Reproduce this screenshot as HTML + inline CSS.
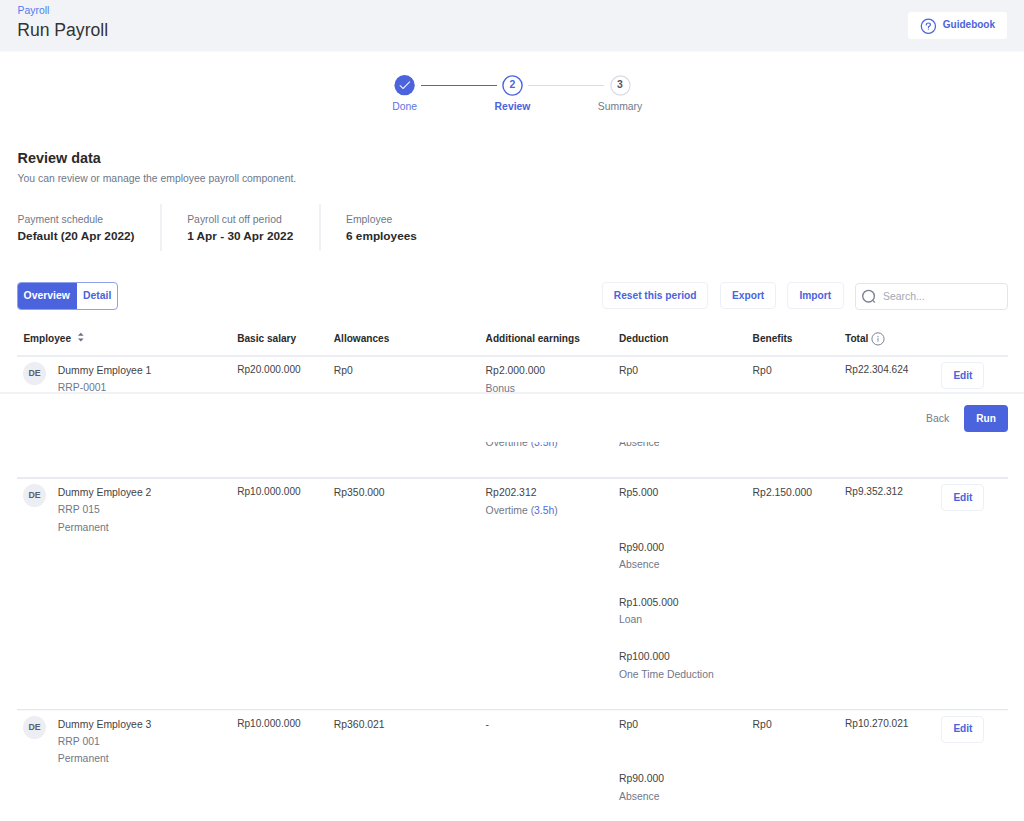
<!DOCTYPE html>
<html><head><meta charset="utf-8"><style>
html,body{margin:0;padding:0;background:#fff;width:1024px;height:821px;overflow:hidden;position:relative;font-family:"Liberation Sans",sans-serif;}
.t{position:absolute;white-space:nowrap;}
.r{position:absolute;}
</style></head><body>
<div class="r" style="left:0.00px;top:0.00px;width:1024.00px;height:51.00px;background:#f2f3f7;"></div>
<div class="r" style="left:0.00px;top:51.00px;width:1024.00px;height:1.00px;background:#f8f9fb;"></div>
<div class="t" style="left:17.60px;top:3.00px;font-size:10.4px;line-height:16.64px;color:#4f7cf0;">Payroll</div>
<div class="t" style="left:17.20px;top:16.00px;font-size:17.6px;line-height:28.16px;color:#333333;">Run Payroll</div>
<div class="r" style="left:908.10px;top:12.00px;width:98.90px;height:27.20px;background:#fff;border-radius:3px;"></div>
<svg class="r" style="left:920px;top:17.6px" width="17" height="17" viewBox="0 0 17 17"><circle cx="8.4" cy="8.25" r="7.1" fill="none" stroke="#4B63DD" stroke-width="1.25"/><path d="M6.3 7.0 C6.3 5.8 7.2 5.0 8.35 5.0 C9.5 5.0 10.4 5.8 10.4 6.8 C10.4 7.8 9.6 8.1 8.9 8.6 C8.5 8.9 8.4 9.1 8.4 9.4" fill="none" stroke="#4B63DD" stroke-width="1.2" stroke-linecap="round"/><circle cx="8.4" cy="11.1" r="0.7" fill="#4B63DD"/></svg>
<div class="t" style="left:942.80px;top:17.00px;font-size:10.0px;line-height:16.0px;color:#4B63DD;font-weight:700;">Guidebook</div>
<div class="r" style="left:420.60px;top:84.80px;width:76.00px;height:1.20px;background:#4B63DD;"></div>
<div class="r" style="left:528.40px;top:84.80px;width:76.00px;height:1.20px;background:#d9dce3;"></div>
<svg class="r" style="left:394px;top:74.6px" width="21" height="21" viewBox="0 0 21 21"><circle cx="10.6" cy="10.2" r="10.15" fill="#4B63DD"/><path d="M6.1 10.7 L9.1 13.5 L15.6 6.8" fill="none" stroke="#e6e9fb" stroke-width="1.15" stroke-linecap="round" stroke-linejoin="round"/></svg>
<svg class="r" style="left:502px;top:74.8px" width="21" height="21" viewBox="0 0 21 21"><circle cx="10.5" cy="10.5" r="9.6" fill="#fff" stroke="#4B63DD" stroke-width="1.4"/></svg>
<svg class="r" style="left:609.5px;top:74.8px" width="21" height="21" viewBox="0 0 21 21"><circle cx="10.5" cy="10.5" r="9.6" fill="#fff" stroke="#d9dce3" stroke-width="1.2"/></svg>
<div class="t" style="left:512.50px;top:77.00px;font-size:10.4px;line-height:16.64px;color:#4B63DD;font-weight:700;transform:translateX(-50%);">2</div>
<div class="t" style="left:620.00px;top:77.00px;font-size:10.4px;line-height:16.64px;color:#4f5566;font-weight:700;transform:translateX(-50%);">3</div>
<div class="t" style="left:404.70px;top:99.00px;font-size:10.4px;line-height:16.64px;color:#5b73e3;transform:translateX(-50%);">Done</div>
<div class="t" style="left:512.50px;top:99.00px;font-size:10.4px;line-height:16.64px;color:#4B63DD;font-weight:700;transform:translateX(-50%);">Review</div>
<div class="t" style="left:620.00px;top:99.00px;font-size:10.4px;line-height:16.64px;color:#737a8a;transform:translateX(-50%);">Summary</div>
<div class="t" style="left:17.60px;top:147.00px;font-size:14.4px;line-height:23.04px;color:#2a2a2a;font-weight:700;">Review data</div>
<div class="t" style="left:17.60px;top:171.00px;font-size:10.4px;line-height:16.64px;color:#6f7789;">You can review or manage the employee payroll component.</div>
<div class="t" style="left:17.60px;top:212.00px;font-size:10.4px;line-height:16.64px;color:#6f7789;">Payment schedule</div>
<div class="t" style="left:17.60px;top:227.00px;font-size:11.8px;line-height:18.88px;color:#2a2a2a;font-weight:700;">Default (20 Apr 2022)</div>
<div class="r" style="left:160.00px;top:204.00px;width:2.00px;height:47.00px;background:#f0f1f5;"></div>
<div class="t" style="left:187.20px;top:212.00px;font-size:10.4px;line-height:16.64px;color:#6f7789;">Payroll cut off period</div>
<div class="t" style="left:187.20px;top:227.00px;font-size:11.8px;line-height:18.88px;color:#2a2a2a;font-weight:700;">1 Apr - 30 Apr 2022</div>
<div class="r" style="left:319.00px;top:204.00px;width:2.00px;height:47.00px;background:#f0f1f5;"></div>
<div class="t" style="left:346.00px;top:212.00px;font-size:10.4px;line-height:16.64px;color:#6f7789;">Employee</div>
<div class="t" style="left:346.00px;top:227.00px;font-size:11.8px;line-height:18.88px;color:#2a2a2a;font-weight:700;">6 employees</div>
<div class="r" style="left:17px;top:282px;width:99px;height:26px;border:1px solid #8fa0ec;border-radius:4px;overflow:hidden;background:#fff"><div style="position:absolute;left:0;top:0;width:59px;height:26px;background:#4B63DD"></div></div>
<div class="t" style="left:23.60px;top:288.00px;font-size:10.4px;line-height:16.64px;color:#fff;font-weight:700;">Overview</div>
<div class="t" style="left:83.00px;top:288.00px;font-size:10.4px;line-height:16.64px;color:#4B63DD;font-weight:700;">Detail</div>
<div class="r" style="left:601.60px;top:282.40px;width:106.40px;height:27.00px;border:1px solid #eef0f8;border-radius:4px;box-sizing:border-box;background:#fff;"></div>
<div class="t" style="left:613.80px;top:288.00px;font-size:10.2px;line-height:16.32px;color:#4B63DD;font-weight:700;">Reset this period</div>
<div class="r" style="left:720.00px;top:282.40px;width:56.00px;height:27.00px;border:1px solid #eef0f8;border-radius:4px;box-sizing:border-box;background:#fff;"></div>
<div class="t" style="left:732.00px;top:288.00px;font-size:10.2px;line-height:16.32px;color:#4B63DD;font-weight:700;">Export</div>
<div class="r" style="left:787.20px;top:282.40px;width:56.80px;height:27.00px;border:1px solid #eef0f8;border-radius:4px;box-sizing:border-box;background:#fff;"></div>
<div class="t" style="left:799.40px;top:288.00px;font-size:10.2px;line-height:16.32px;color:#4B63DD;font-weight:700;">Import</div>
<div class="r" style="left:855.00px;top:282.50px;width:153.00px;height:27.50px;border:1px solid #e2e5eb;border-radius:4px;box-sizing:border-box;background:#fff;"></div>
<svg class="r" style="left:861px;top:288.5px" width="16" height="16" viewBox="0 0 16 16"><circle cx="7.55" cy="7.15" r="5.8" fill="none" stroke="#778093" stroke-width="1.35"/><path d="M12.3 11.9 L13.5 13.1" stroke="#778093" stroke-width="1.3" stroke-linecap="round"/></svg>
<div class="t" style="left:883.00px;top:289.00px;font-size:10.4px;line-height:16.64px;color:#a3a8b4;">Search...</div>
<div class="t" style="left:23.40px;top:331.00px;font-size:10.1px;line-height:16.16px;color:#2a2a2a;font-weight:700;">Employee</div>
<svg class="r" style="left:77px;top:331.5px" width="8" height="11" viewBox="0 0 8 11"><path d="M0.9 3.7 L3.8 0.7 L6.7 3.7 Z M0.9 6.6 L3.8 9.6 L6.7 6.6 Z" fill="#6a7284"/></svg>
<div class="t" style="left:237.20px;top:331.00px;font-size:10.1px;line-height:16.16px;color:#2a2a2a;font-weight:700;">Basic salary</div>
<div class="t" style="left:333.80px;top:331.00px;font-size:10.1px;line-height:16.16px;color:#2a2a2a;font-weight:700;">Allowances</div>
<div class="t" style="left:485.60px;top:331.00px;font-size:10.1px;line-height:16.16px;color:#2a2a2a;font-weight:700;">Additional earnings</div>
<div class="t" style="left:619.00px;top:331.00px;font-size:10.1px;line-height:16.16px;color:#2a2a2a;font-weight:700;">Deduction</div>
<div class="t" style="left:752.60px;top:331.00px;font-size:10.1px;line-height:16.16px;color:#2a2a2a;font-weight:700;">Benefits</div>
<div class="t" style="left:845.00px;top:331.00px;font-size:10.1px;line-height:16.16px;color:#2a2a2a;font-weight:700;">Total</div>
<svg class="r" style="left:870.5px;top:332px" width="14" height="14" viewBox="0 0 14 14"><circle cx="7" cy="6.9" r="6.1" fill="none" stroke="#7a8294" stroke-width="1.0"/><circle cx="7" cy="4.3" r="0.65" fill="#7a8294"/><rect x="6.55" y="5.7" width="0.9" height="4.0" fill="#7a8294"/></svg>
<div class="r" style="left:17.00px;top:355.40px;width:991.00px;height:1.30px;background:#eceef3;"></div>
<div class="r" style="left:23.00px;top:362.20px;width:23.00px;height:23.00px;background:#eceef3;border-radius:50%;"></div>
<div class="t" style="left:34.60px;top:366.00px;font-size:8.8px;line-height:14.08px;color:#596072;font-weight:700;transform:translateX(-50%);">DE</div>
<div class="t" style="left:57.80px;top:363.00px;font-size:10.4px;line-height:16.64px;color:#434343;">Dummy Employee 1</div>
<div class="t" style="left:57.80px;top:380.00px;font-size:10.4px;line-height:16.64px;color:#6f7789;">RRP-0001</div>
<div class="t" style="left:237.20px;top:362.00px;font-size:10.1px;line-height:16.16px;color:#434343;">Rp20.000.000</div>
<div class="t" style="left:333.80px;top:363.00px;font-size:10.4px;line-height:16.64px;color:#434343;">Rp0</div>
<div class="t" style="left:485.60px;top:363.00px;font-size:10.4px;line-height:16.64px;color:#434343;">Rp2.000.000</div>
<div class="t" style="left:485.60px;top:381.00px;font-size:10.4px;line-height:16.64px;color:#6f7789;">Bonus</div>
<div class="t" style="left:485.60px;top:418.00px;font-size:10.4px;line-height:16.64px;color:#434343;">Rp202.312</div>
<div class="t" style="left:485.60px;top:435.00px;font-size:10.4px;line-height:16.64px;color:#6f7789;">Overtime (<span style="color:#4f6be6">3.5h</span>)</div>
<div class="t" style="left:619.00px;top:363.00px;font-size:10.4px;line-height:16.64px;color:#434343;">Rp0</div>
<div class="t" style="left:619.00px;top:418.00px;font-size:10.4px;line-height:16.64px;color:#434343;">Rp90.000</div>
<div class="t" style="left:619.00px;top:435.00px;font-size:10.4px;line-height:16.64px;color:#6f7789;">Absence</div>
<div class="t" style="left:752.60px;top:363.00px;font-size:10.4px;line-height:16.64px;color:#434343;">Rp0</div>
<div class="t" style="left:845.00px;top:362.00px;font-size:10.1px;line-height:16.16px;color:#434343;">Rp22.304.624</div>
<div class="r" style="left:940.90px;top:362.30px;width:43.50px;height:27.20px;border:1px solid #eef0f8;border-radius:4px;box-sizing:border-box;background:#fff;"></div>
<div class="t" style="left:953.40px;top:368.00px;font-size:10.1px;line-height:16.16px;color:#4B63DD;font-weight:700;">Edit</div>
<div class="r" style="left:17.00px;top:477.00px;width:991.00px;height:2.00px;background:#e9ebf0;"></div>
<div class="r" style="left:23.00px;top:484.20px;width:23.00px;height:23.00px;background:#eceef3;border-radius:50%;"></div>
<div class="t" style="left:34.60px;top:488.00px;font-size:8.8px;line-height:14.08px;color:#596072;font-weight:700;transform:translateX(-50%);">DE</div>
<div class="t" style="left:57.80px;top:485.00px;font-size:10.4px;line-height:16.64px;color:#434343;">Dummy Employee 2</div>
<div class="t" style="left:57.80px;top:502.00px;font-size:10.4px;line-height:16.64px;color:#6f7789;">RRP 015</div>
<div class="t" style="left:57.80px;top:520.00px;font-size:10.4px;line-height:16.64px;color:#6f7789;">Permanent</div>
<div class="t" style="left:237.20px;top:484.00px;font-size:10.1px;line-height:16.16px;color:#434343;">Rp10.000.000</div>
<div class="t" style="left:333.80px;top:485.00px;font-size:10.4px;line-height:16.64px;color:#434343;">Rp350.000</div>
<div class="t" style="left:485.60px;top:485.00px;font-size:10.4px;line-height:16.64px;color:#434343;">Rp202.312</div>
<div class="t" style="left:485.60px;top:503.00px;font-size:10.4px;line-height:16.64px;color:#6f7789;">Overtime (<span style="color:#4f6be6">3.5h</span>)</div>
<div class="t" style="left:619.00px;top:485.00px;font-size:10.4px;line-height:16.64px;color:#434343;">Rp5.000</div>
<div class="t" style="left:619.00px;top:540.00px;font-size:10.4px;line-height:16.64px;color:#434343;">Rp90.000</div>
<div class="t" style="left:619.00px;top:557.00px;font-size:10.4px;line-height:16.64px;color:#6f7789;">Absence</div>
<div class="t" style="left:619.00px;top:595.00px;font-size:10.4px;line-height:16.64px;color:#434343;">Rp1.005.000</div>
<div class="t" style="left:619.00px;top:612.00px;font-size:10.4px;line-height:16.64px;color:#6f7789;">Loan</div>
<div class="t" style="left:619.00px;top:649.00px;font-size:10.4px;line-height:16.64px;color:#434343;">Rp100.000</div>
<div class="t" style="left:619.00px;top:667.00px;font-size:10.4px;line-height:16.64px;color:#6f7789;">One Time Deduction</div>
<div class="t" style="left:752.60px;top:485.00px;font-size:10.4px;line-height:16.64px;color:#434343;">Rp2.150.000</div>
<div class="t" style="left:845.00px;top:484.00px;font-size:10.1px;line-height:16.16px;color:#434343;">Rp9.352.312</div>
<div class="r" style="left:940.90px;top:484.30px;width:43.50px;height:27.20px;border:1px solid #eef0f8;border-radius:4px;box-sizing:border-box;background:#fff;"></div>
<div class="t" style="left:953.40px;top:490.00px;font-size:10.1px;line-height:16.16px;color:#4B63DD;font-weight:700;">Edit</div>
<div class="r" style="left:17.00px;top:709.00px;width:991.00px;height:1.00px;background:#e3e6eb;"></div>
<div class="r" style="left:17.00px;top:710.00px;width:991.00px;height:1.00px;background:#f7f8fa;"></div>
<div class="r" style="left:23.00px;top:715.80px;width:23.00px;height:23.00px;background:#eceef3;border-radius:50%;"></div>
<div class="t" style="left:34.60px;top:720.00px;font-size:8.8px;line-height:14.08px;color:#596072;font-weight:700;transform:translateX(-50%);">DE</div>
<div class="t" style="left:57.80px;top:717.00px;font-size:10.4px;line-height:16.64px;color:#434343;">Dummy Employee 3</div>
<div class="t" style="left:57.80px;top:734.00px;font-size:10.4px;line-height:16.64px;color:#6f7789;">RRP 001</div>
<div class="t" style="left:57.80px;top:751.00px;font-size:10.4px;line-height:16.64px;color:#6f7789;">Permanent</div>
<div class="t" style="left:237.20px;top:716.00px;font-size:10.1px;line-height:16.16px;color:#434343;">Rp10.000.000</div>
<div class="t" style="left:333.80px;top:717.00px;font-size:10.4px;line-height:16.64px;color:#434343;">Rp360.021</div>
<div class="t" style="left:485.60px;top:717.00px;font-size:10.4px;line-height:16.64px;color:#434343;">-</div>
<div class="t" style="left:619.00px;top:717.00px;font-size:10.4px;line-height:16.64px;color:#434343;">Rp0</div>
<div class="t" style="left:619.00px;top:771.00px;font-size:10.4px;line-height:16.64px;color:#434343;">Rp90.000</div>
<div class="t" style="left:619.00px;top:789.00px;font-size:10.4px;line-height:16.64px;color:#6f7789;">Absence</div>
<div class="t" style="left:752.60px;top:717.00px;font-size:10.4px;line-height:16.64px;color:#434343;">Rp0</div>
<div class="t" style="left:845.00px;top:716.00px;font-size:10.1px;line-height:16.16px;color:#434343;">Rp10.270.021</div>
<div class="r" style="left:940.90px;top:715.90px;width:43.50px;height:27.20px;border:1px solid #eef0f8;border-radius:4px;box-sizing:border-box;background:#fff;"></div>
<div class="t" style="left:953.40px;top:721.00px;font-size:10.1px;line-height:16.16px;color:#4B63DD;font-weight:700;">Edit</div>
<div class="r" style="left:0.00px;top:392.00px;width:1024.00px;height:50.00px;background:#fff;border-top:2px solid #f1f2f5;box-sizing:border-box;"></div>
<div class="t" style="left:926.00px;top:411.00px;font-size:10.4px;line-height:16.64px;color:#737a8a;">Back</div>
<div class="r" style="left:964.00px;top:405.00px;width:44.00px;height:27.20px;background:#4B63DD;border-radius:4px;"></div>
<div class="t" style="left:986.00px;top:411.00px;font-size:10.1px;line-height:16.16px;color:#fff;font-weight:700;transform:translateX(-50%);">Run</div>
</body></html>
